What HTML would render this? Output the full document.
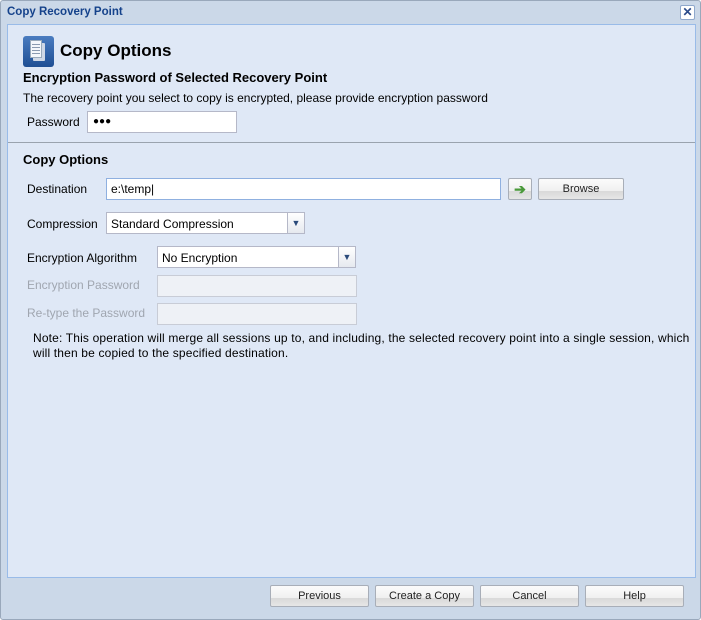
<!DOCTYPE html>
<html><head><style>
*{box-sizing:border-box;margin:0;padding:0}
body{width:701px;height:620px;overflow:hidden;background:#fff;font-family:"Liberation Sans",sans-serif;font-size:12px;color:#000;position:relative}
.win{position:absolute;left:0;top:0;width:701px;height:620px;background:#cbd8e8;border:1px solid #99a8bb;border-radius:3px}
.a{position:absolute;white-space:nowrap}
.panel{position:absolute;left:6px;top:23px;width:689px;height:554px;background:#dfe8f6;border:1px solid #99bbe8}
.inp{position:absolute;background:#fff;border:1px solid #b5b8c8}
.dis{position:absolute;background:#eef1f6;border:1px solid #c8ccd6}
.btn{position:absolute;height:22px;border:1px solid #a8aeb8;border-radius:2px;background:linear-gradient(#fbfbfb 0,#f0f0f0 60%,#d9d9d9 61%,#e6e6e6 100%);text-align:center;line-height:20px;font-size:11px;color:#222}
.dd{position:absolute;top:-1px;right:-1px;width:18px;bottom:-1px;border:1px solid #b5b8c8;background:linear-gradient(#fff,#e6e9ef);font-size:9px;color:#2a4a7a;text-align:center;line-height:20px}
.g{color:#a0a6b0}
</style></head><body>
<div class="win">
<div class="a" style="left:6px;top:5px;font-weight:bold;font-size:11.5px;color:#15428b">Copy Recovery Point</div>
<div class="a" style="left:679px;top:4px;width:15px;height:15px;border:1px solid #8fa8cc;border-radius:2px;background:#fff;color:#2a4a8a;font-size:12px;line-height:13px;text-align:center;font-weight:bold">✕</div>
<div class="panel">
<div class="a" style="left:15px;top:11px;width:31px;height:31px;border-radius:3px;background:linear-gradient(#4a7cc0,#1f4f94)">
<div style="position:absolute;left:10px;top:7px;width:12px;height:18px;background:#cfd8e6;border-radius:1px"></div>
<div style="position:absolute;left:7px;top:4px;width:12px;height:18px;background:#f4f7fb;border:1px solid #9ab"></div>
<div style="position:absolute;left:9px;top:8px;width:8px;height:1px;background:#8a9ab0;box-shadow:0 3px #8a9ab0,0 6px #8a9ab0,0 9px #8a9ab0"></div>
</div>
<div class="a" style="left:52px;top:16px;font-size:17px;font-weight:bold">Copy Options</div>
<div class="a" style="left:15px;top:45px;font-size:13px;font-weight:bold">Encryption Password of Selected Recovery Point</div>
<div class="a" style="left:15px;top:66px">The recovery point you select to copy is encrypted, please provide encryption password</div>
<div class="a" style="left:19px;top:90px">Password</div>
<div class="inp" style="left:79px;top:86px;width:150px;height:22px;padding:3px 5px;font-size:10px;line-height:14px">●●●</div>
<div class="a" style="left:0;top:117px;width:687px;height:1px;background:#9aa3ae"></div>
<div class="a" style="left:15px;top:127px;font-size:13px;font-weight:bold">Copy Options</div>
<div class="a" style="left:19px;top:157px">Destination</div>
<div class="inp" style="left:98px;top:153px;width:395px;height:22px;border-color:#8fb0e0;padding:3px 4px">e:\temp|</div>
<div class="btn" style="left:500px;top:153px;width:24px;color:#4a9a3a;font-size:14px;font-weight:bold">➔</div>
<div class="btn" style="left:530px;top:153px;width:86px">Browse</div>
<div class="a" style="left:19px;top:192px">Compression</div>
<div class="inp" style="left:98px;top:187px;width:199px;height:22px;padding:4px 4px">Standard Compression<div class="dd">▼</div></div>
<div class="a" style="left:19px;top:226px">Encryption Algorithm</div>
<div class="inp" style="left:149px;top:221px;width:199px;height:22px;padding:4px 4px">No Encryption<div class="dd">▼</div></div>
<div class="a g" style="left:19px;top:253px">Encryption Password</div>
<div class="dis" style="left:149px;top:250px;width:200px;height:22px"></div>
<div class="a g" style="left:19px;top:281px">Re-type the Password</div>
<div class="dis" style="left:149px;top:278px;width:200px;height:22px"></div>
<div class="a" style="left:25px;top:306px;line-height:15px;letter-spacing:0.16px">Note: This operation will merge all sessions up to, and including, the selected recovery point into a single session, which<br>will then be copied to the specified destination.</div>
</div>
<div class="btn" style="left:269px;top:584px;width:99px">Previous</div>
<div class="btn" style="left:374px;top:584px;width:99px">Create a Copy</div>
<div class="btn" style="left:479px;top:584px;width:99px">Cancel</div>
<div class="btn" style="left:584px;top:584px;width:99px">Help</div>
</div>
</body></html>
